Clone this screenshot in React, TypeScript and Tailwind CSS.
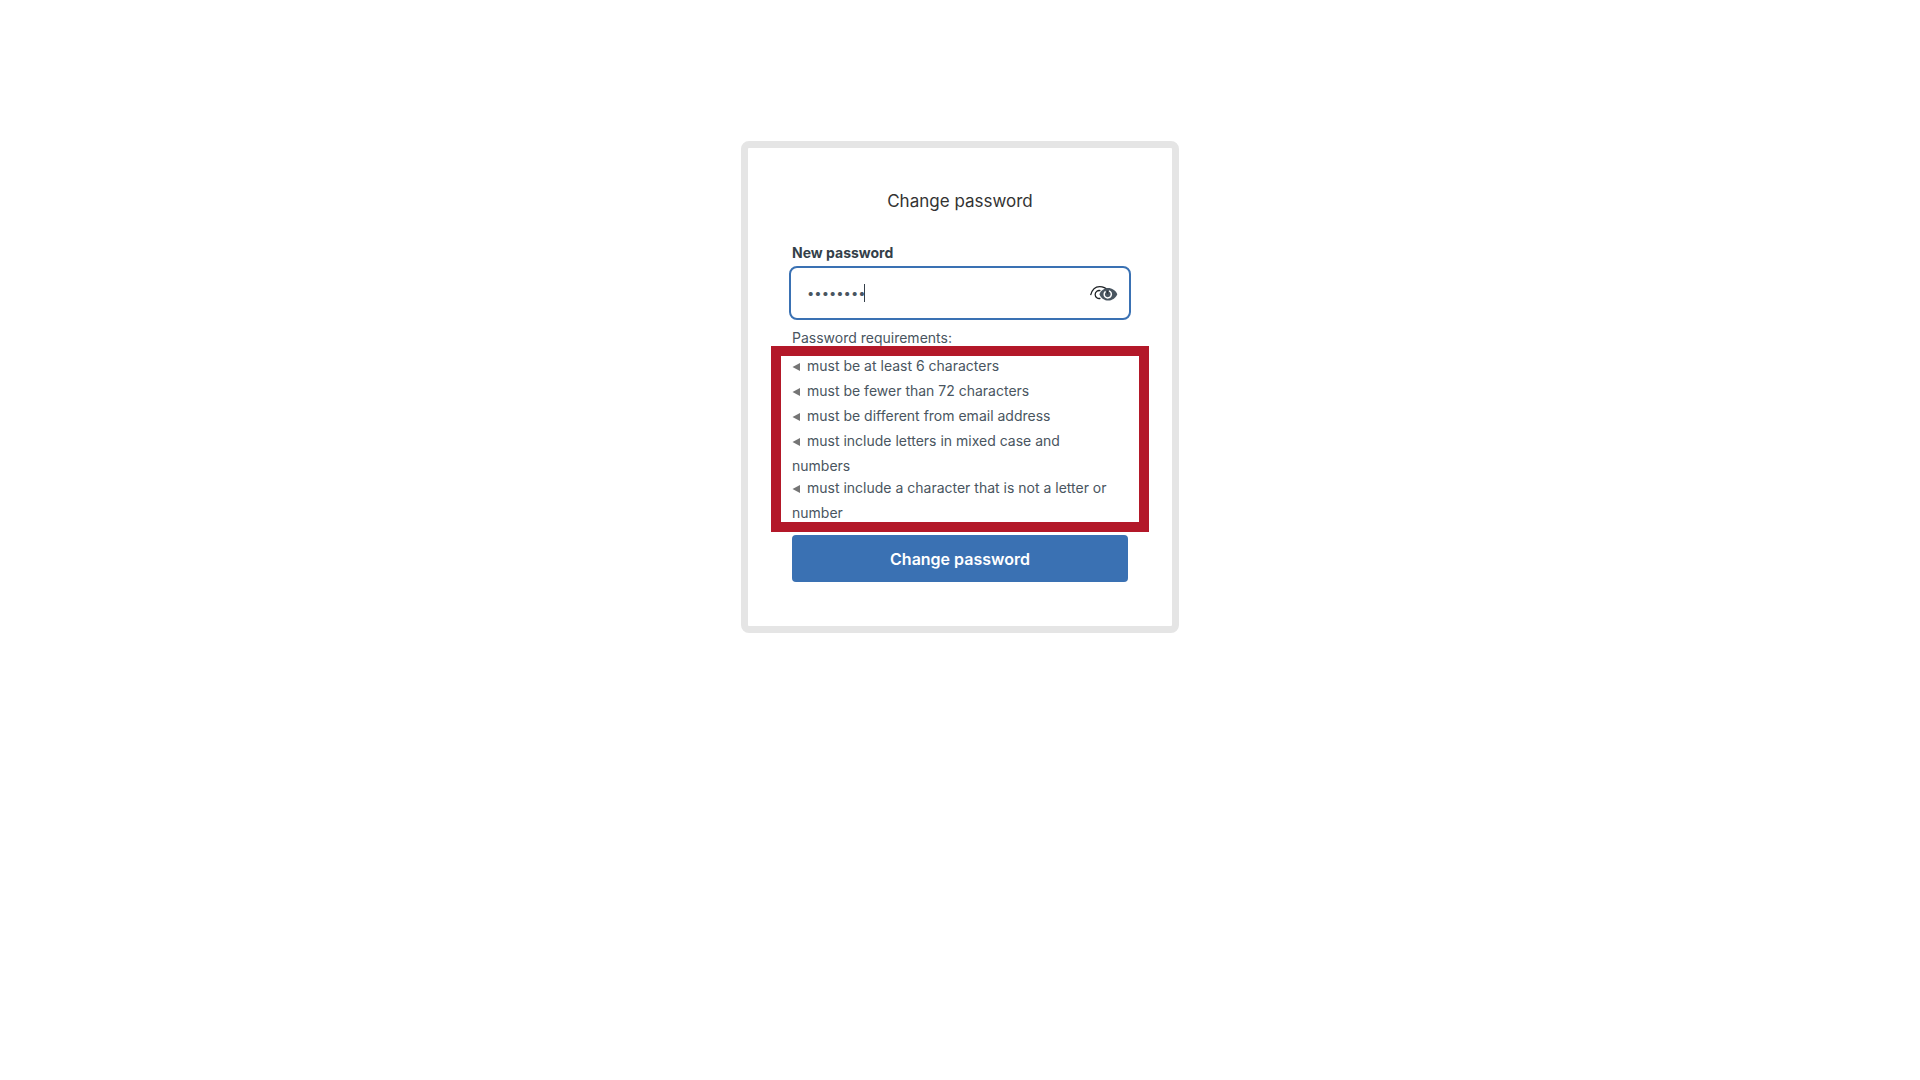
import { useState } from 'react';

const REQUIREMENTS = [
  'must be at least 6 characters',
  'must be fewer than 72 characters',
  'must be different from email address',
  'must include letters in mixed case and numbers',
  'must include a character that is not a letter or number',
];

function EyeIcon() {
  return (
    <svg className="h-4 w-7" viewBox="0 0 28 16" fill="none" aria-hidden="true">
      <path d="M0.6 10.2C2 5 5.2 1.7 9.6 1.7c3.6 0 6.6 1.6 8.8 4" stroke="#1f2326" strokeWidth={1.3} />
      <path d="M10.4 5.7a4 4 0 1 0 0 7.6" stroke="#1f2326" strokeWidth={1.3} />
      <path
        d="M9.4 9.2C11 5.4 14.4 3.1 18.2 3.1S25.5 5.4 27.3 9.2C25.5 13.2 22 15.5 18.2 15.5S11 13.2 9.4 9.2Z"
        fill="#495560"
      />
      <path d="M15.6 6.4a3.6 3.6 0 1 0 3.4-0.5" stroke="#fff" strokeWidth={1.5} />
      <path d="M17.5 5.8v2.8" stroke="#2b3238" strokeWidth={1.4} />
    </svg>
  );
}

function PasswordField() {
  const [password, setPassword] = useState('Passw0rd');
  const [visible, setVisible] = useState(false);

  return (
    <div>
      <label htmlFor="new-password" className="block text-[14px] leading-5 font-bold text-[#343f49]">
        New password
      </label>
      <div className="relative -mx-[3px] mt-[3px] flex h-[54px] items-center rounded-lg border-2 border-[#3a71b3] bg-white pr-[11px] pl-4">
        <input
          id="new-password"
          type={visible ? 'text' : 'password'}
          value={password}
          onChange={(e) => setPassword(e.target.value)}
          className="min-w-0 flex-1 text-[13px] leading-5 text-[#495560] caret-transparent outline-none"
        />
        <span className="absolute left-[73px] h-[18px] w-px bg-[#343f49]" />
        <button type="button" aria-label="Show password" onClick={() => setVisible(!visible)}>
          <EyeIcon />
        </button>
      </div>
    </div>
  );
}

export default function App() {
  return (
    <main className="min-h-screen bg-white px-4 pt-[141px] font-['Inter',sans-serif] text-[#495560]">
      <form
        onSubmit={(e) => e.preventDefault()}
        className="mx-auto w-full max-w-[438px] rounded-lg border-[7px] border-[#e5e5e5] px-11 pt-[39px] pb-11"
      >
        <h1 className="mb-7 text-center text-[17px] leading-7 text-[#333]">Change password</h1>
        <PasswordField />
        <p className="mt-2 text-[14px] leading-5">Password requirements:</p>
        <div className="relative -mx-[21px] -mt-0.5 border-10 border-[#b31829] pr-6 pl-[11px]">
          <ul className="-my-[3px] text-[14px] leading-[25px]">
            {REQUIREMENTS.map((text) => (
              <li key={text} className="last:-mt-[3px]">
                <svg className="mr-[7px] inline h-2 w-2 align-baseline" viewBox="0 0 8 8" aria-hidden="true">
                  <path d="M0.5 4L8 0v8z" fill="#757575" />
                </svg>
                {text}
              </li>
            ))}
          </ul>
        </div>
        <button
          type="submit"
          className="mt-[3px] h-[47px] w-full rounded bg-[#3a71b3] text-[16px] font-semibold text-white"
        >
          Change password
        </button>
      </form>
    </main>
  );
}
